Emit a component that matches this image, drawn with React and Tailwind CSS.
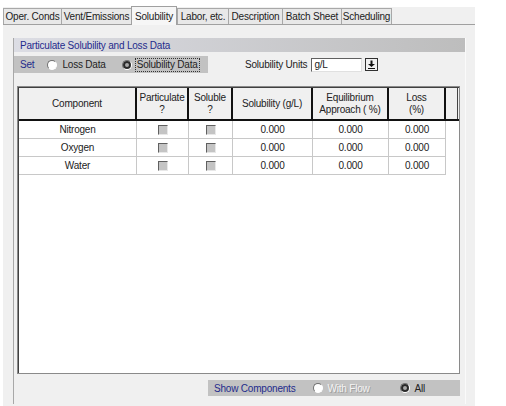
import React from 'react';

const tabs = [
  { label: 'Oper. Conds', w: 58 },
  { label: 'Vent/Emissions', w: 70 },
  { label: 'Solubility', w: 46, active: true },
  { label: 'Labor, etc.', w: 51 },
  { label: 'Description', w: 54 },
  { label: 'Batch Sheet', w: 59 },
  { label: 'Scheduling', w: 51 },
];

const rows = ['Nitrogen', 'Oxygen', 'Water'];

function Radio({ checked }) {
  return (
    <span className="w-[10px] h-[10px] rounded-full border border-t-[#707070] border-l-[#707070] border-b-white border-r-white bg-white inline-flex items-center justify-center shrink-0">
      {checked && <span className="w-[8px] h-[8px] rounded-full border-2 border-[#2a2a2a] bg-[#a8a8a8]" />}
    </span>
  );
}

function Check() {
  return <span className="block w-[10px] h-[10px] bg-[#c4c4c4] border border-t-[#606060] border-l-[#606060] border-b-[#e8e8e8] border-r-[#e8e8e8]" />;
}

function HeadCell({ children }) {
  return (
    <div className="flex flex-col items-center justify-center text-center leading-[12px] text-[#222] border-r-2 border-[#111]">
      {children}
    </div>
  );
}

export default function App() {
  return (
    <div className="w-[506px] h-[406px] bg-white overflow-hidden font-['Liberation_Sans',Arial,sans-serif] text-[10px] tracking-[-0.2px] whitespace-nowrap text-[#222]">
      <div className="ml-[3px] mt-[7px] w-[472px] h-[399px] bg-[#f0f0f0] flex flex-col">
        {/* tabs */}
        <div className="flex items-end h-[18px] border-b border-[#a0a0a0]">
          {tabs.map((t) =>
            t.active ? (
              <div
                key={t.label}
                style={{ width: t.w }}
                className="h-[19px] -mb-px bg-[#f6f6f6] border border-b-0 border-[#a0a0a0] flex items-start justify-center pt-[2px] shrink-0"
              >
                {t.label}
              </div>
            ) : (
              <div
                key={t.label}
                style={{ width: t.w }}
                className="h-[16px] bg-[#e8e8e8] border border-b-0 border-r-0 last:border-r border-[#a8a8a8] flex items-center justify-center shrink-0"
              >
                {t.label}
              </div>
            )
          )}
        </div>

        {/* tab page */}
        <div className="flex-1 pl-[10px] pt-[13px]">
          <div className="w-[453px] h-[366px] border-l border-[#a8a8a8] border-r border-r-[#fafafa] flex flex-col">
            <div className="h-[14px] bg-gradient-to-r from-[#dcdde4] to-[#bdbdbd] text-[#1f2b8c] pl-[6px] flex items-center">
              Particulate Solubility and Loss Data
            </div>

            <div className="mt-[4px] flex items-center h-[17px]">
              <div className="w-[194px] h-[17px] bg-[#c2c2c2] flex items-center">
                <span className="text-[#1f2b8c] ml-[6px]">Set</span>
                <span className="ml-[13px] flex"><Radio /></span>
                <span className="ml-[5px]">Loss Data</span>
                <span className="ml-[16px] flex"><Radio checked /></span>
                <span className="ml-[3px] px-[1px] border border-dotted border-[#333] leading-[12px]">Solubility Data</span>
              </div>
              <span className="ml-[37px]">Solubility Units</span>
              <div className="ml-[4px] w-[51px] h-[14px] bg-white border border-t-[#606060] border-l-[#606060] border-b-[#e0e0e0] border-r-[#e0e0e0] pl-[2px] leading-[12px]">
                g/L
              </div>
              <div className="ml-[3px] w-[13px] h-[13px] bg-[#f0f0f0] border border-[#303030] flex items-center justify-center">
                <svg width="9" height="9" viewBox="0 0 9 9">
                  <path d="M3.5 0.5h2v3.5h2.5l-3.5 3-3.5-3h2.5z" fill="#111" />
                  <rect x="1" y="8" width="7" height="1" fill="#111" />
                </svg>
              </div>
            </div>

            {/* grid */}
            <div className="mt-[13px] ml-[3px] w-[443px] h-[288px] bg-white border border-[#8a8a8a] shadow-[inset_1px_1px_0_#404040] pl-[1px] pt-[1px]">
              <div className="flex h-[33px] bg-[#f0f0f0] border-b-2 border-[#111]">
                <div className="grid grid-cols-[118px_52px_44px_80px_76px_57px]">
                  <HeadCell>Component</HeadCell>
                  <HeadCell>Particulate<span>?</span></HeadCell>
                  <HeadCell>Soluble<span>?</span></HeadCell>
                  <HeadCell>Solubility (g/L)</HeadCell>
                  <HeadCell>Equilibrium<span>Approach ( %)</span></HeadCell>
                  <HeadCell>Loss<span>(%)</span></HeadCell>
                </div>
                <div className="w-[12px] border-r border-[#444]" />
              </div>
              {rows.map((r) => (
                <div key={r} className="grid grid-cols-[118px_52px_44px_80px_76px_57px] w-[427px] h-[18px] border-b border-[#c8c8c8]">
                  <div className="flex items-center justify-center border-r border-[#c8c8c8]">{r}</div>
                  <div className="flex items-center justify-center border-r border-[#c8c8c8]"><Check /></div>
                  <div className="flex items-center justify-center border-r border-[#c8c8c8]"><Check /></div>
                  <div className="flex items-center justify-center border-r border-[#c8c8c8]">0.000</div>
                  <div className="flex items-center justify-center border-r border-[#c8c8c8]">0.000</div>
                  <div className="flex items-center justify-center border-r border-[#c8c8c8]">0.000</div>
                </div>
              ))}
            </div>

            {/* show components */}
            <div className="mt-[6px] ml-[194px] w-[252px] h-[16px] bg-[#c2c2c2] flex items-center">
              <span className="ml-[6px] text-[#1f2b8c]">Show Components</span>
              <span className="ml-[17px] flex"><Radio /></span>
              <span className="ml-[5px] text-[#f4f4f4] [text-shadow:1px_1px_0_#a0a0a0]">With Flow</span>
              <span className="ml-[30px] flex"><Radio checked /></span>
              <span className="ml-[5px]">All</span>
            </div>
          </div>
        </div>
      </div>
    </div>
  );
}
